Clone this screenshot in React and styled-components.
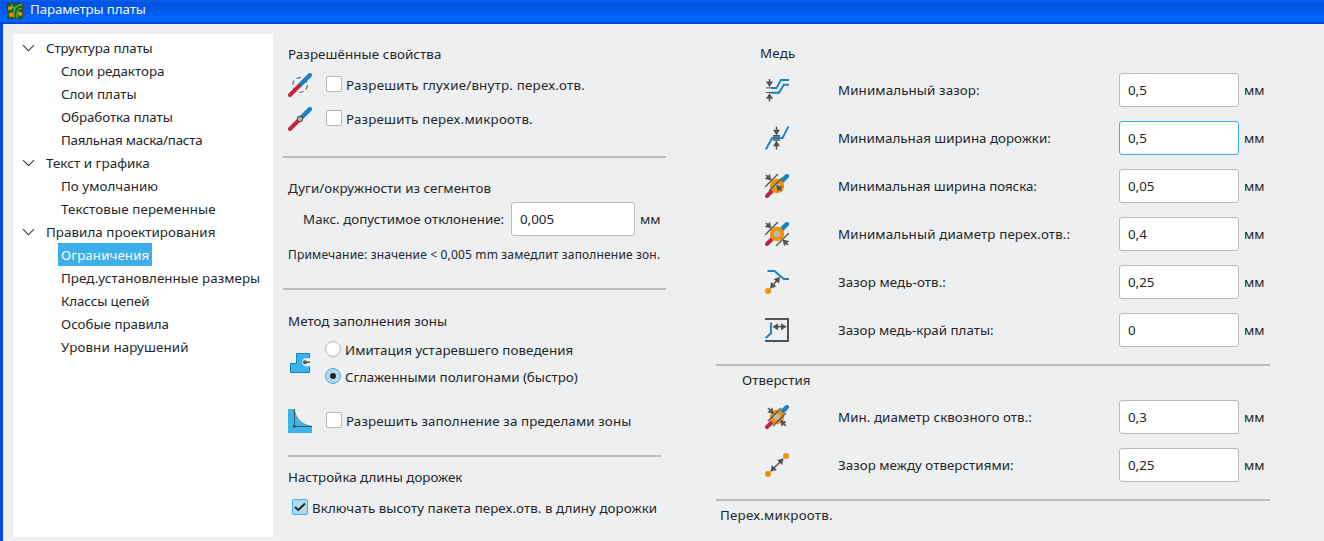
import React from 'react';
import styled, { createGlobalStyle, css } from 'styled-components';

const C = {
  bg: '#eeeff1', text: '#232629', line: '#bbbdbe', accent: '#3daee9',
  ink: '#545454', blue: '#1a81c4', red: '#bf2641', orange: '#f29100', hole: '#b9b9b9', fill: '#39b4ea',
};

const Global = createGlobalStyle`
  * { box-sizing: border-box; }
  body { margin: 0; overflow: hidden; background: ${C.bg}; }
`;
const Window = styled.div`
  width: 1324px; height: 541px; display: flex; flex-direction: column; overflow: hidden;
  font: 13.33px/20px 'Noto Sans', sans-serif; color: ${C.text}; background: ${C.bg};
`;
const TitleBar = styled.header`
  flex: none; height: 24px; display: flex; align-items: flex-start; gap: 7px; padding: 3px 0 0 7px;
  color: #f4f8ff;
  background: linear-gradient(#0a5ff0 0, #0054e3 3px, #0055e6 8px, #005cf4 14px, #0066ff 18px, #0066ff 21px, #0048d8 23px, #003dd0 24px);
`;
const Title = styled.span`line-height: 12px; letter-spacing: -0.12px;`;
const Body = styled.div`
  flex: 1; min-height: 0; display: flex; align-items: flex-start; padding-left: 10px;
  border-left: 3px solid #0048e8;
`;
const Tree = styled.nav`
  flex: none; width: 260px; height: 503px; margin-top: 10px; padding-top: 2px; background: #fff;
`;
const TreeRow = styled.div`
  height: 23px; display: flex; align-items: center; padding-left: ${p => (p.$child ? 45 : 9)}px;
`;
const Chevron = styled.svg`
  flex: none; width: 13px; height: 8px; margin-right: 8px; display: block;
`;
const TreeLabel = styled.span`
  height: 23px; padding: 0 3px; line-height: 24px; white-space: nowrap; letter-spacing: ${p => p.$ls || 0}px;
  ${p => p.$active && css`background: ${C.accent}; color: #fcfcfc;`}
`;
const Column = styled.section`
  flex: none; display: flex; flex-direction: column; width: ${p => p.$w}px; margin-left: ${p => p.$left}px; padding-top: ${p => p.$top}px;
`;
const Heading = styled.h2`
  margin: ${p => p.$top || 0}px 0 0 ${p => (p.$indent === undefined ? 5 : p.$indent)}px;
  font: inherit; height: 20px; white-space: nowrap; letter-spacing: ${p => p.$ls || 0}px;
`;
const Rule = styled.hr`
  border: 0; height: 2px; width: ${p => p.$w}px; background: ${C.line};
  margin: ${p => p.$top}px 0 0 ${p => p.$indent || 0}px; flex: none;
`;
const Option = styled.label`
  display: flex; align-items: center; height: 24px;
  margin: ${p => p.$top || 0}px 0 0 ${p => p.$indent || 0}px;
`;
const OptionText = styled.span`
  white-space: nowrap; margin-left: 4px; letter-spacing: ${p => p.$ls || 0}px; padding-bottom: 1px;
`;
const Box = styled.span`
  flex: none; width: 16px; height: 16px; display: grid; place-items: center; margin-top: -2px;
  border: 1px solid ${p => (p.$on ? C.accent : '#b3b5b7')}; border-radius: ${p => (p.$round ? 8 : 2)}px;
  background: ${p => (p.$on ? '#b1d9ee' : '#fff')};
`;
const Dot = styled.span`width: 6px; height: 6px; border-radius: 3px; background: #232629;`;
const IconSvg = styled.svg`
  flex: none; width: 24px; height: 24px; display: block; margin-right: ${p => p.$gap || 0}px;
`;
const RadioGroup = styled.div`display: flex; align-items: flex-start; margin: 7px 0 0 5px;`;
const RadioIcon = styled.div`margin-top: 13px;`;
const RadioList = styled.div`display: flex; flex-direction: column; gap: 3px; margin-left: 13px;`;
const Deviation = styled.div`display: flex; align-items: center; height: 34px; margin: 4px 0 0 20px;`;
const FieldLabel = styled.span`
  flex: none; width: ${p => p.$w}px; white-space: nowrap; letter-spacing: ${p => p.$ls || 0}px;
`;
const Field = styled.input`
  width: ${p => p.$w}px; height: 34px; padding: 0 8px; font: inherit; color: inherit; outline: 0;
  border: 1px solid ${p => (p.$focus ? C.accent : '#b8babc')}; border-radius: 3px; background: #fff;
`;
const Unit = styled.span`margin-left: 5px;`;
const Note = styled.p`
  margin: 9px 0 0 5px; height: 20px; font-size: 12px; white-space: nowrap; letter-spacing: 0.16px;
`;
const Rows = styled.div`
  display: flex; flex-direction: column; gap: 14px; margin: ${p => p.$top}px 0 0 49px;
`;
const Constraint = styled.div`display: flex; align-items: center; height: 34px;`;

const head = (x, y, a) => (
  <path d="M0 0L-5.8-3.5L-5.8 3.5Z" fill={C.ink} transform={`translate(${x} ${y}) rotate(${a})`} />
);
const Arrow = ({ x1, y1, x2, y2, both }) => {
  const a = (Math.atan2(y2 - y1, x2 - x1) * 180) / Math.PI;
  const t = Math.hypot(x2 - x1, y2 - y1);
  const ux = (x2 - x1) / t, uy = (y2 - y1) / t;
  return (
    <g>
      <path d={`M${x1 + (both ? ux * 3 : 0)} ${y1 + (both ? uy * 3 : 0)}L${x2 - ux * 3} ${y2 - uy * 3}`} stroke={C.ink} strokeWidth="1.5" />
      {head(x2, y2, a)}
      {both && head(x1, y1, a + 180)}
    </g>
  );
};
const Track = () => (
  <g strokeWidth="4" strokeLinecap="round">
    <path d="M2 22L12 12" stroke={C.red} />
    <path d="M22 2L12 12" stroke={C.blue} strokeLinecap="butt" />
    <path d="M22 2L13.5 10.5" stroke={C.blue} />
  </g>
);
const glyphs = {
  blind: <><circle cx="12" cy="12" r="7.3" stroke={C.ink} strokeWidth="1.1" strokeDasharray="4.6 3.05" /><Track /></>,
  micro: <><Track /><circle cx="12" cy="12" r="2.6" fill={C.hole} stroke={C.ink} strokeWidth="1.1" /></>,
  zone: <>
    <path d="M2.5 21.5V12.5H8.5V2.5H21.5V21.5Z" fill={C.fill} stroke={C.blue} />
    <path d="M22.2 7.2H17.5A4.1 4.1 0 0 0 17.5 15.2H22.2Z" fill={C.bg} />
    <circle cx="17" cy="11.2" r="2" fill={C.ink} /><path d="M17 11.2H22" stroke={C.ink} strokeWidth="1.6" />
  </>,
  outside: <>
    <path d="M0 0H6.5C7.5 9 14 16 24 17V24H0Z" fill={C.fill} />
    <path d="M6.8 2C8 10 14.5 16 23 17.2" stroke="#5b93bb" strokeWidth=".8" />
    <path d="M6.5 0V17.5H24" stroke={C.ink} /><circle cx="6.5" cy="17.5" r="1.7" fill={C.ink} />
  </>,
  clearance: <>
    <path d="M6 10H11.5L16 2H24M6 14.7H14L18.8 6.7H24" stroke={C.blue} strokeWidth="1.9" />
    <path d="M1 9.9H7M1 14.5H7" stroke={C.ink} />
    <Arrow x1={4.5} y1={1} x2={4.5} y2={9.3} /><Arrow x1={4.5} y1={23.5} x2={4.5} y2={15} />
  </>,
  width: <>
    <path d="M.8 23.5L7.2 12H17.5L23.5.5" stroke={C.blue} strokeWidth="1.9" />
    <path d="M8 9.8H15M8 14H15" stroke={C.ink} strokeWidth="1.7" />
    <Arrow x1={11.5} y1={0.5} x2={11.5} y2={9.5} /><Arrow x1={11.5} y1={23.5} x2={11.5} y2={14.5} />
  </>,
  annular: <>
    <Track /><circle cx="12" cy="12" r="7.2" fill={C.orange} /><circle cx="12" cy="12" r="2.8" fill={C.hole} />
    <path d="M0 13L13 0M4 17L17 4" stroke={C.ink} strokeWidth="1.4" />
    <Arrow x1={1} y1={1} x2={6.5} y2={6.5} /><Arrow x1={17} y1={17} x2={11} y2={11} />
  </>,
  diameter: <>
    <Track /><circle cx="12" cy="12" r="7.2" fill={C.orange} /><circle cx="12" cy="12" r="3.2" fill={C.hole} />
    <path d="M0 13L13 0M11 24L24 11" stroke={C.ink} strokeWidth="1.4" />
    <Arrow x1={1} y1={1} x2={6.5} y2={6.5} /><Arrow x1={23} y1={23} x2={17.5} y2={17.5} />
  </>,
  holeSize: <>
    <Track /><circle cx="12" cy="12" r="7.2" fill={C.orange} /><circle cx="12" cy="12" r="3.2" fill={C.hole} />
    <path d="M3 16L16 3M8 21L21 8" stroke={C.ink} strokeWidth="1.4" />
    <Arrow x1={3} y1={3} x2={9} y2={9} /><Arrow x1={21} y1={21} x2={15} y2={15} />
  </>,
  copperHole: <>
    <path d="M2.5 1H9.5L18.8 9H24" stroke={C.blue} strokeWidth="1.9" />
    <circle cx="3" cy="21" r="3" fill={C.orange} /><Arrow both x1={5} y1={18.8} x2={15} y2={6.8} />
  </>,
  edge: <>
    <path d="M0 1H23V23H0" stroke={C.ink} strokeWidth="2" />
    <path d="M6 4.5V15.2L.6 20" stroke={C.blue} strokeWidth="1.9" /><Arrow both x1={7.3} y1={8.7} x2={21.8} y2={8.7} />
  </>,
  holes: <>
    <circle cx="3" cy="21" r="3" fill={C.orange} /><circle cx="21" cy="3" r="3" fill={C.orange} />
    <Arrow both x1={5.3} y1={18.7} x2={18.7} y2={5.3} />
  </>,
};
const Icon = ({ name, gap }) => <IconSvg viewBox="0 0 24 24" fill="none" $gap={gap}>{glyphs[name]}</IconSvg>;

const BoardLogo = () => (
  <svg width="16" height="16" viewBox="0 0 16 16" fill="none">
    <rect width="16" height="16" rx="1.5" fill="#3a4419" />
    <rect x="1" y="1" width="14" height="14" fill="#0c6410" />
    <path d="M5 1V3.5L8 6M6.8 15V9.5C6.8 5 9.5 2.5 15 1.5M10.2 15V10.5C10.2 8 11.5 6 15 5" stroke="#4fa055" strokeWidth="1.8" />
    <rect x="1" y="3.2" width="4" height="4" rx="1.6" fill={C.orange} />
    <circle cx="4.2" cy="11.8" r="2.2" fill={C.orange} /><circle cx="13.2" cy="10.8" r="2.1" fill={C.orange} />
  </svg>
);

const tree = [
  { label: 'Структура платы', ls: -0.08 },
  { label: 'Слои редактора', child: true },
  { label: 'Слои платы', child: true },
  { label: 'Обработка платы', child: true, ls: -0.07 },
  { label: 'Паяльная маска/паста', child: true, ls: -0.22 },
  { label: 'Текст и графика', ls: 0.07 },
  { label: 'По умолчанию', child: true, ls: 0.06 },
  { label: 'Текстовые переменные', child: true, ls: 0.12 },
  { label: 'Правила проектирования', ls: 0.07 },
  { label: 'Ограничения', child: true, active: true, ls: 0.09 },
  { label: 'Пред.установленные размеры', child: true, ls: 0.07 },
  { label: 'Классы цепей', child: true, ls: -0.08 },
  { label: 'Особые правила', child: true },
  { label: 'Уровни нарушений', child: true, ls: 0.12 },
];
const copper = [
  { icon: 'clearance', label: 'Минимальный зазор:', value: '0,5', ls: 0.12 },
  { icon: 'width', label: 'Минимальная ширина дорожки:', value: '0,5', focus: true },
  { icon: 'annular', label: 'Минимальная ширина пояска:', value: '0,05', ls: -0.04 },
  { icon: 'diameter', label: 'Минимальный диаметр перех.отв.:', value: '0,4', ls: 0.13 },
  { icon: 'copperHole', label: 'Зазор медь-отв.:', value: '0,25', ls: 0.07 },
  { icon: 'edge', label: 'Зазор медь-край платы:', value: '0' },
];
const holes = [
  { icon: 'holeSize', label: 'Мин. диаметр сквозного отв.:', value: '0,3', ls: 0.07 },
  { icon: 'holes', label: 'Зазор между отверстиями:', value: '0,25', ls: 0.04 },
];

const ConstraintRows = ({ items, top }) => (
  <Rows $top={top}>
    {items.map(({ icon, label, value, focus, ls }) => (
      <Constraint key={label}>
        <Icon name={icon} gap={49} />
        <FieldLabel $w={281} $ls={ls}>{label}</FieldLabel>
        <Field $w={120} $focus={focus} defaultValue={value} />
        <Unit>мм</Unit>
      </Constraint>
    ))}
  </Rows>
);

export default function App() {
  return (
    <Window>
      <Global />
      <TitleBar><BoardLogo /><Title>Параметры платы</Title></TitleBar>
      <Body>
        <Tree>
          {tree.map(({ label, child, active, ls }) => (
            <TreeRow key={label} $child={child}>
              {!child && <Chevron viewBox="0 0 13 8" fill="none"><path d="M1 1.2L6.5 6.7L12 1.2" stroke="#3b3e41" strokeWidth="1.1" /></Chevron>}
              <TreeLabel $active={active} $ls={ls}>{label}</TreeLabel>
            </TreeRow>
          ))}
        </Tree>
        <Column $w={383} $left={10} $top={20}>
          <Heading $ls={0.09}>Разрешённые свойства</Heading>
          <Option $top={9} $indent={5}><Icon name="blind" gap={14} /><Box /><OptionText $ls={0.22}>Разрешить глухие/внутр. перех.отв.</OptionText></Option>
          <Option $top={10} $indent={5}><Icon name="micro" gap={14} /><Box /><OptionText $ls={0.2}>Разрешить перех.микроотв.</OptionText></Option>
          <Rule $w={383} $top={25} />
          <Heading $top={20} $ls={0.06}>Дуги/окружности из сегментов</Heading>
          <Deviation>
            <FieldLabel $w={208} $ls={0.04}>Макс. допустимое отклонение:</FieldLabel>
            <Field $w={124} defaultValue="0,005" /><Unit>мм</Unit>
          </Deviation>
          <Note>Примечание: значение &lt; 0,005 mm замедлит заполнение зон.</Note>
          <Rule $w={383} $top={23} />
          <Heading $top={21} $ls={0.04}>Метод заполнения зоны</Heading>
          <RadioGroup>
            <RadioIcon><Icon name="zone" /></RadioIcon>
            <RadioList>
              <Option><Box $round /><OptionText $ls={0.08}>Имитация устаревшего поведения</OptionText></Option>
              <Option><Box $round $on><Dot /></Box><OptionText>Сглаженными полигонами (быстро)</OptionText></Option>
            </RadioList>
          </RadioGroup>
          <Option $top={20} $indent={5}><Icon name="outside" gap={14} /><Box /><OptionText $ls={0.12}>Разрешить заполнение за пределами зоны</OptionText></Option>
          <Rule $w={373} $top={22} $indent={5} />
          <Heading $top={10}>Настройка длины дорожек</Heading>
          <Option $top={9} $indent={9}>
            <Box $on><svg width="12" height="10" viewBox="0 0 12 10" fill="none"><path d="M1 5L4.3 8L11 1.5" stroke="#232629" strokeWidth="2" /></svg></Box>
            <OptionText $ls={0.07}>Включать высоту пакета перех.отв. в длину дорожки</OptionText>
          </Option>
        </Column>
        <Column $w={554} $left={50} $top={19}>
          <Heading $indent={44} $ls={0.2}>Медь</Heading>
          <ConstraintRows items={copper} top={10} />
          <Rule $w={554} $top={17} />
          <Heading $indent={26} $top={4} $ls={0.05}>Отверстия</Heading>
          <ConstraintRows items={holes} top={10} />
          <Rule $w={554} $top={17} />
          <Heading $indent={4} $top={4} $ls={0.23}>Перех.микроотв.</Heading>
        </Column>
      </Body>
    </Window>
  );
}
